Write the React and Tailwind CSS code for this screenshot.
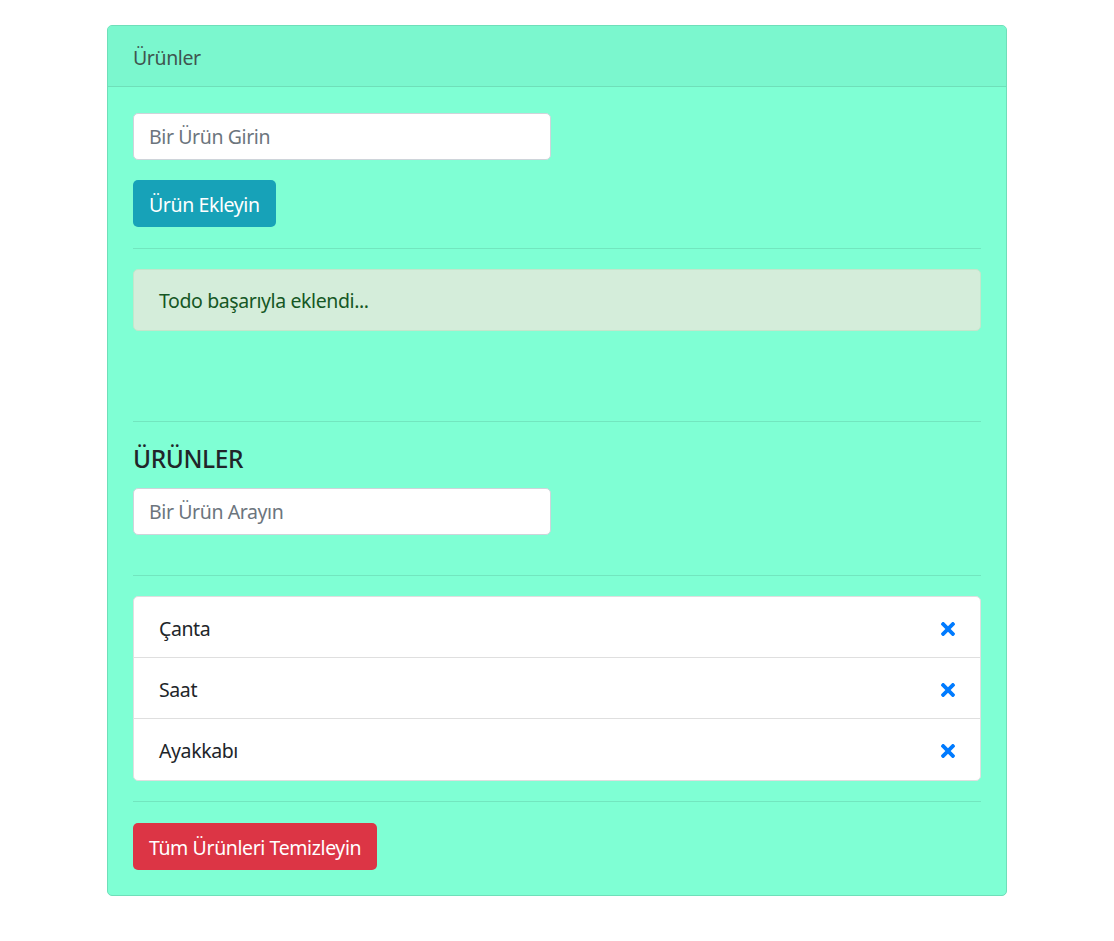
import React from "react";

function TimesIcon() {
  return (
    <svg viewBox="0 80 352 352" className="w-[14px] h-[14px]" fill="#007bff" aria-hidden="true">
      <path d="M242.72 256l100.07-100.07c12.28-12.28 12.28-32.19 0-44.48l-22.24-22.24c-12.28-12.28-32.19-12.28-44.48 0L176 189.28 75.93 89.21c-12.28-12.28-32.19-12.28-44.48 0L9.21 111.45c-12.28 12.28-12.28 32.19 0 44.48L109.28 256 9.21 356.07c-12.28 12.28-12.28 32.19 0 44.48l22.24 22.24c12.28 12.28 32.2 12.28 44.48 0L176 322.72l100.07 100.07c12.28 12.28 32.2 12.28 44.48 0l22.24-22.24c12.28-12.28 12.28-32.19 0-44.48L242.72 256z" />
    </svg>
  );
}

export default function App() {
  const items = ["Çanta", "Saat", "Ayakkabı"];
  return (
    <div
      className="min-h-screen bg-white pt-[25px] text-[19.5px] tracking-[-0.4px] text-[#212529]"
      style={{ fontFamily: '"Noto Sans", "Open Sans", sans-serif' }}
    >
      <div className="mx-auto w-[900px] rounded-[5px] border border-[#6fdfb9] bg-[#7fffd4] overflow-hidden">
        <div className="h-[61px] border-b border-[#6fdfb9] bg-[#7bf7ce] px-[25px] pt-[3px] flex items-center text-[#3f5550]">
          Ürünler
        </div>
        <div className="px-[25px] pt-[26px] pb-[25px]">
          <input
            type="text"
            placeholder="Bir Ürün Girin"
            className="block w-[418px] h-[47px] rounded-[5px] border border-[#ced4da] bg-white px-[15px] text-[19.5px] text-[#495057] placeholder:text-[#6c757d] outline-none"
          />
          <button className="mt-[20px] h-[47px] rounded-[5px] bg-[#17a2b8] px-[16px] pt-[3px] text-white text-[19.5px] tracking-[-0.4px]">
            Ürün Ekleyin
          </button>
          <hr className="mt-[21px] mb-[20px] border-0 border-t border-[#72e6bf]" />
          <div className="h-[62px] rounded-[5px] border border-[#c3e6cb] bg-[#d4edda] px-[25px] pt-[2px] flex items-center text-[#155724]">
            Todo başarıyla eklendi...
          </div>
          <hr className="mt-[90px] mb-[20px] border-0 border-t border-[#72e6bf]" />
          <h5 className="pt-[2px] text-[24.5px] font-medium leading-[30px] mt-0">ÜRÜNLER</h5>
          <input
            type="text"
            placeholder="Bir Ürün Arayın"
            className="mt-[14px] block w-[418px] h-[47px] rounded-[5px] border border-[#ced4da] bg-white px-[15px] text-[19.5px] text-[#495057] placeholder:text-[#6c757d] outline-none"
          />
          <hr className="mt-[40px] mb-[20px] border-0 border-t border-[#72e6bf]" />
          <ul className="rounded-[5px] border border-[#dfdfdf] bg-white divide-y divide-[#dfdfdf]">
            {items.map((it) => (
              <li key={it} className="h-[61px] pt-[3px] flex items-center justify-between px-[25px]">
                <span>{it}</span>
                <TimesIcon />
              </li>
            ))}
          </ul>
          <hr className="mt-[20px] mb-[21px] border-0 border-t border-[#72e6bf]" />
          <button className="h-[47px] rounded-[5px] bg-[#dc3545] px-[16px] pt-[3px] text-white text-[19.5px] tracking-[-0.4px]">
            Tüm Ürünleri Temizleyin
          </button>
        </div>
      </div>
    </div>
  );
}
